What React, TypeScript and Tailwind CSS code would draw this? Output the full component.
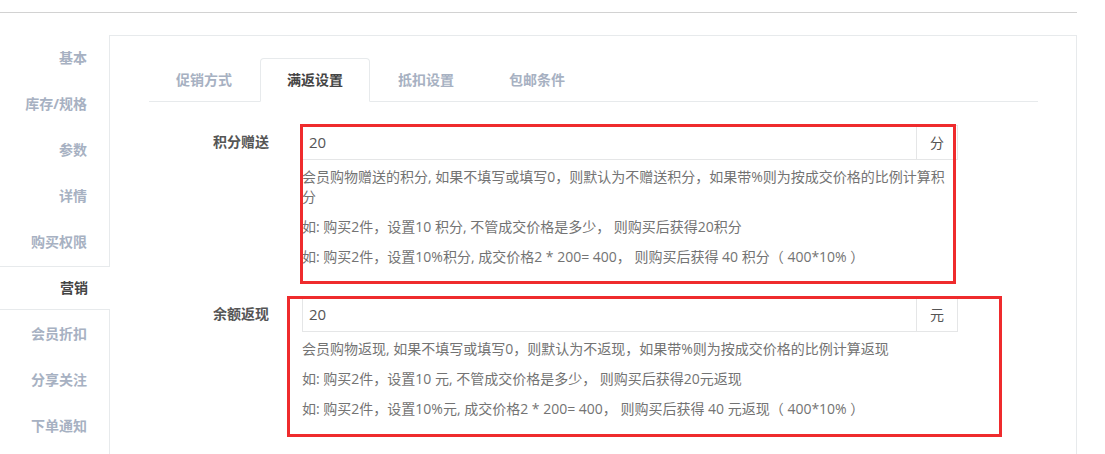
import React from "react";

const sideItems = [
  "基本",
  "库存/规格",
  "参数",
  "详情",
  "购买权限",
  "营销",
  "会员折扣",
  "分享关注",
  "下单通知",
];

const tabs = ["促销方式", "满返设置", "抵扣设置", "包邮条件"];

function InputGroup({ value, unit }: { value: string; unit: string }) {
  return (
    <div className="flex h-[35px] w-[656px] border border-[#e5e6e7] bg-white">
      <div className="flex-1 pl-[6px] text-[15px] leading-[33px] text-[#555]">{value}</div>
      <div className="w-[41px] border-l border-[#e5e6e7] text-center text-[14px] leading-[33px] text-[#555]">
        {unit}
      </div>
    </div>
  );
}

export default function App() {
  return (
    <div
      className="w-[1105px] h-[454px] overflow-hidden bg-white"
      style={{ fontFamily: '"Open Sans", "Noto Sans CJK SC", sans-serif' }}
    >
      <div className="w-[1077px] h-[13px] border-b border-[#d2d2d2]" />
      <div className="flex w-[1077px] mt-[22px]">
        <nav className="w-[109px] pt-px flex flex-col">
          {sideItems.map((s, i) => {
            const active = i === 5;
            return (
              <div
                key={s}
                className={
                  active
                    ? "relative z-10 -mr-px h-[44px] mb-[2px] pb-[2px] flex items-center justify-end pr-[22px] bg-white border-y border-[#e7eaec] text-[14px] font-bold text-[#444]"
                    : "h-[44px] mb-[2px] pb-[2px] flex items-center justify-end pr-[22px] text-[14px] font-bold text-[#a7b1c2]"
                }
              >
                {s}
              </div>
            );
          })}
        </nav>
        <section className="flex-1 border-l border-t border-r border-[#e7eaec] pt-[22px] pl-[39px] pr-[38px] pb-[40px]">
          <ul className="flex border-b border-[#e7eaec]">
            {tabs.map((t, i) => {
              const active = i === 1;
              return (
                <li
                  key={t}
                  className={
                    active
                      ? "-mb-px mr-px px-[26px] pt-[11px] pb-[11px] leading-[20px] border border-[#e7eaec] border-b-white rounded-t-[4px] bg-white text-[14px] font-bold text-[#444]"
                      : "-mb-px mr-px px-[26px] pt-[11px] pb-[11px] leading-[20px] border border-transparent text-[14px] font-bold text-[#a7b1c2]"
                  }
                >
                  {t}
                </li>
              );
            })}
          </ul>

          <div className="mt-[23px]">
            <div className="flex items-start">
              <div className="w-[120px] h-[35px] leading-[34px] text-right text-[14px] font-bold text-[#555]">
                积分赠送
              </div>
              <div className="relative ml-[33px] w-[656px]">
                <InputGroup value="20" unit="分" />
                <p className="mt-[7px] text-[14px] leading-[20px] text-[#737373]">
                  会员购物赠送的积分, 如果不填写或填写0，则默认为不赠送积分，如果带%则为按成交价格的比例计算积
                  <br />分
                </p>
                <p className="mt-[10px] text-[14px] leading-[20px] text-[#737373]">
                  如: 购买2件，设置10 积分, 不管成交价格是多少， 则购买后获得20积分
                </p>
                <p className="mt-[10px] text-[14px] leading-[20px] text-[#737373]">
                  如: 购买2件，设置10%积分, 成交价格2 * 200= 400， 则购买后获得 40 积分（ 400*10% ）
                </p>
                <div className="absolute left-[-2px] top-[-1px] w-[656px] h-[160px] border-[3px] border-[#ef2b2d] pointer-events-none" />
              </div>
            </div>

            <div className="flex items-start mt-[30px]">
              <div className="w-[120px] h-[35px] leading-[34px] text-right text-[14px] font-bold text-[#555]">
                余额返现
              </div>
              <div className="relative ml-[33px] w-[656px]">
                <InputGroup value="20" unit="元" />
                <p className="mt-[7px] text-[14px] leading-[20px] text-[#737373]">
                  会员购物返现, 如果不填写或填写0，则默认为不返现，如果带%则为按成交价格的比例计算返现
                </p>
                <p className="mt-[10px] text-[14px] leading-[20px] text-[#737373]">
                  如: 购买2件，设置10 元, 不管成交价格是多少， 则购买后获得20元返现
                </p>
                <p className="mt-[10px] text-[14px] leading-[20px] text-[#737373]">
                  如: 购买2件，设置10%元, 成交价格2 * 200= 400， 则购买后获得 40 元返现（ 400*10% ）
                </p>
                <div className="absolute left-[-15px] top-[-1px] w-[715px] h-[141px] border-[3px] border-[#ef2b2d] pointer-events-none" />
              </div>
            </div>
          </div>
        </section>
      </div>
    </div>
  );
}
